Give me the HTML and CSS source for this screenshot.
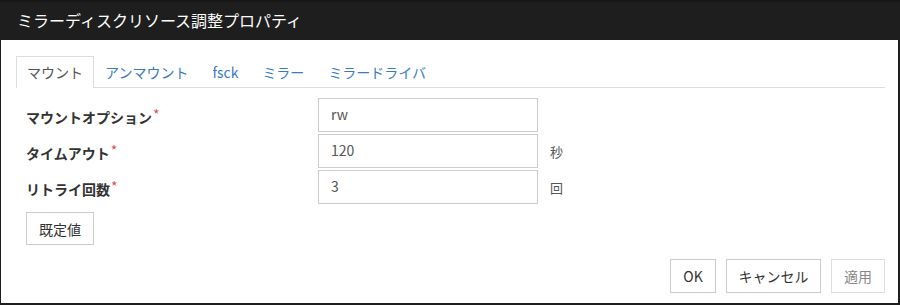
FILE: index.html
```html
<!DOCTYPE html>
<html lang="ja">
<head>
    <meta charset="UTF-8">
    <title>ミラーディスクリソース調整プロパティ</title>
    <link rel="stylesheet" href="styles.css">
</head>
<body>
    <div class="dialog">
        <div class="title-bar">ミラーディスクリソース調整プロパティ</div>
        <div class="dialog-body">
            <ul class="tabs">
                <li class="tab active">マウント</li>
                <li class="tab">アンマウント</li>
                <li class="tab">fsck</li>
                <li class="tab">ミラー</li>
                <li class="tab">ミラードライバ</li>
            </ul>
            <div class="form">
                <div class="form-row">
                    <label class="label">マウントオプション<span class="req">*</span></label>
                    <div class="input">rw</div>
                </div>
                <div class="form-row">
                    <label class="label">タイムアウト<span class="req">*</span></label>
                    <div class="input">120</div>
                    <span class="unit">秒</span>
                </div>
                <div class="form-row">
                    <label class="label">リトライ回数<span class="req">*</span></label>
                    <div class="input">3</div>
                    <span class="unit">回</span>
                </div>
                <button class="btn default-btn" type="button">既定値</button>
            </div>
            <div class="footer">
                <button class="btn ok-btn" type="button">OK</button>
                <button class="btn cancel-btn" type="button">キャンセル</button>
                <button class="btn apply-btn" type="button" disabled>適用</button>
            </div>
        </div>
    </div>
</body>
</html>
```

FILE: styles.css
```css
body {
    margin: 0;
    padding: 0;
    font-family: "Noto Sans CJK JP", "Noto Sans", sans-serif;
    font-size: 14px;
    color: #333;
    background-color: #fff;
}
.dialog {
    width: 900px;
    height: 305px;
    box-sizing: border-box;
    border-left: 1px solid #1e1e1e;
    border-right: 2px solid #1e1e1e;
    border-bottom: 2px solid #1e1e1e;
    display: flex;
    flex-direction: column;
}
.title-bar {
    height: 40px;
    box-sizing: border-box;
    background-color: #1e1e1e;
    border-top: 2px solid #161616;
    color: #fff;
    font-size: 16px;
    line-height: 37px;
    padding-left: 17px;
    margin-right: -2px;
    margin-left: -1px;
}
.dialog-body {
    flex: 1;
    display: flex;
    flex-direction: column;
    padding: 16px 13px 10px 15px;
}
.tabs {
    list-style: none;
    margin: 0;
    padding: 0;
    display: flex;
    border-bottom: 1px solid #ddd;
    height: 31px;
}
.tab {
    padding: 0 10px;
    line-height: 30px;
    color: #3a7bc0;
    margin-right: 2px;
    border: 1px solid transparent;
    border-bottom: none;
    white-space: nowrap;
}
.tab.active {
    color: #555;
    border-color: #ddd;
    background-color: #fff;
    height: 31px;
    margin-right: 0;
}
.form {
    padding: 10px 0 0 10px;
    display: flex;
    flex-direction: column;
    gap: 2px;
    align-items: flex-start;
}
.form-row {
    display: flex;
    align-items: center;
    height: 34px;
}
.label {
    width: 292px;
    font-weight: bold;
    color: #333;
}
.req {
    color: #d9534f;
    font-weight: normal;
    vertical-align: 3px;
    font-size: 14px;
    margin-left: 1px;
}
.input {
    width: 220px;
    height: 34px;
    box-sizing: border-box;
    border: 1px solid #ccc;
    padding: 0 12px;
    line-height: 31px;
    color: #555;
}
.unit {
    margin-left: 12px;
    color: #555;
    font-size: 13px;
}
.btn {
    font-family: inherit;
    font-size: 14px;
    color: #333;
    background-color: #fff;
    border: 1px solid #ccc;
    height: 34px;
    padding: 0;
    white-space: nowrap;
    cursor: pointer;
}
.default-btn {
    margin-top: 6px;
    width: 68px;
    height: 33px;
}
.footer {
    margin-top: auto;
    display: flex;
    justify-content: flex-end;
    gap: 10px;
}
.ok-btn {
    width: 46px;
}
.cancel-btn {
    width: 95px;
}
.apply-btn {
    width: 54px;
    color: #888;
    border-color: #ddd;
    cursor: default;
}
```
